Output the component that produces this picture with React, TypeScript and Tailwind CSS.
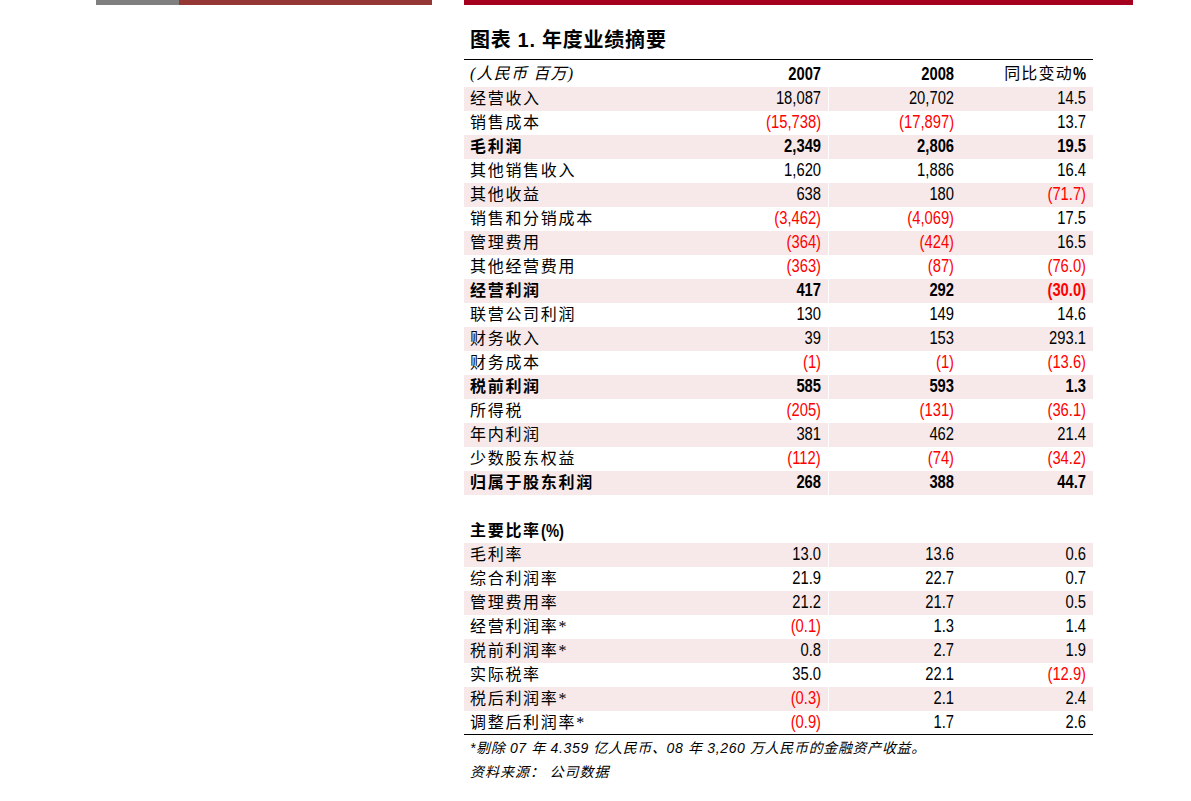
import React from "react";

type Row = { l: string; a: string; b: string; c: string; bold?: boolean };

const rows1: Row[] = [
  { l: "经营收入", a: "18,087", b: "20,702", c: "14.5" },
  { l: "销售成本", a: "(15,738)", b: "(17,897)", c: "13.7" },
  { l: "毛利润", a: "2,349", b: "2,806", c: "19.5", bold: true },
  { l: "其他销售收入", a: "1,620", b: "1,886", c: "16.4" },
  { l: "其他收益", a: "638", b: "180", c: "(71.7)" },
  { l: "销售和分销成本", a: "(3,462)", b: "(4,069)", c: "17.5" },
  { l: "管理费用", a: "(364)", b: "(424)", c: "16.5" },
  { l: "其他经营费用", a: "(363)", b: "(87)", c: "(76.0)" },
  { l: "经营利润", a: "417", b: "292", c: "(30.0)", bold: true },
  { l: "联营公司利润", a: "130", b: "149", c: "14.6" },
  { l: "财务收入", a: "39", b: "153", c: "293.1" },
  { l: "财务成本", a: "(1)", b: "(1)", c: "(13.6)" },
  { l: "税前利润", a: "585", b: "593", c: "1.3", bold: true },
  { l: "所得税", a: "(205)", b: "(131)", c: "(36.1)" },
  { l: "年内利润", a: "381", b: "462", c: "21.4" },
  { l: "少数股东权益", a: "(112)", b: "(74)", c: "(34.2)" },
  { l: "归属于股东利润", a: "268", b: "388", c: "44.7", bold: true },
];

const rows2: Row[] = [
  { l: "毛利率", a: "13.0", b: "13.6", c: "0.6" },
  { l: "综合利润率", a: "21.9", b: "22.7", c: "0.7" },
  { l: "管理费用率", a: "21.2", b: "21.7", c: "0.5" },
  { l: "经营利润率*", a: "(0.1)", b: "1.3", c: "1.4" },
  { l: "税前利润率*", a: "0.8", b: "2.7", c: "1.9" },
  { l: "实际税率", a: "35.0", b: "22.1", c: "(12.9)" },
  { l: "税后利润率*", a: "(0.3)", b: "2.1", c: "2.4" },
  { l: "调整后利润率*", a: "(0.9)", b: "1.7", c: "2.6" },
];

const cjk = "font-['Liberation_Serif','Noto_Sans_CJK_SC',serif]";
const num = "font-['Liberation_Sans','Noto_Sans_CJK_SC',sans-serif]";

function Narrow({ children, cls = "" }: { children: React.ReactNode; cls?: string }) {
  return (
    <span className={`inline-block origin-right scale-x-[0.82] ${num} text-[18px] leading-none ${cls}`}>
      {children}
    </span>
  );
}

function Num({ v, bold, cls }: { v: string; bold?: boolean; cls: string }) {
  const neg = v.startsWith("(");
  return (
    <div
      className={`${cls} flex items-center justify-end pr-[7px] pb-[2px] ${
        neg ? "text-[#ff0000]" : "text-black"
      } ${bold ? "font-bold" : "font-normal"}`}
    >
      <Narrow>{v}</Narrow>
    </div>
  );
}

function TableRow({ r, shaded }: { r: Row; shaded: boolean }) {
  return (
    <div className={`flex h-[24px] ${shaded ? "bg-[#f7e9e9]" : "bg-white"}`}>
      <div
        className={`w-[231px] flex items-center pl-[6px] ${cjk} text-[16px] tracking-[1.7px] text-black ${
          r.bold ? "font-bold" : "font-normal"
        }`}
      >
        {r.l}
      </div>
      <Num v={r.a} bold={r.bold} cls="w-[133px]" />
      <Num v={r.b} bold={r.bold} cls="w-[133px] border-l border-white" />
      <Num v={r.c} bold={r.bold} cls="w-[132px]" />
    </div>
  );
}

export default function App() {
  return (
    <div className="w-[1191px] h-[801px] bg-white flex overflow-hidden">
      <div className="w-[464px] pl-[96px] flex items-start">
        <div className="w-[83px] h-[5px] bg-[#7f7f7f]" />
        <div className="w-[253px] h-[5px] bg-[#953735]" />
      </div>
      <div className="w-[669px] flex flex-col">
        <div className="h-[5px] bg-[#a6001f]" />
        <div
          className={`mt-[21px] h-[28px] flex items-center pl-[6px] ${cjk} text-[20px] font-bold text-black tracking-[0.8px]`}
        >
          <span>图表</span>
          <span className={`${num} ml-[6px]`}>1.</span>
          <span className="ml-[6px]">年度业绩摘要</span>
        </div>
        <div className="w-[629px] mt-[5px] h-px bg-black" />
        <div className="w-[629px] flex flex-col">
          <div className="flex h-[27px] pt-[1px]">
            <div
              className={`w-[231px] flex items-center pl-[6px] ${cjk} italic text-[16px] tracking-[1.2px] text-black`}
            >
              (人民币 百万)
            </div>
            <div className="w-[133px] flex items-center justify-end pr-[7px] font-bold">
              <Narrow>2007</Narrow>
            </div>
            <div className="w-[133px] flex items-center justify-end pr-[7px] font-bold">
              <Narrow>2008</Narrow>
            </div>
            <div
              className={`w-[132px] flex items-center justify-end pr-[7px] ${cjk} text-[16px] tracking-[1.2px]`}
            >
              <span className="mr-[-3px]">同比变动</span>
              <Narrow cls="font-bold tracking-normal">%</Narrow>
            </div>
          </div>
          {rows1.map((r, i) => (
            <TableRow key={r.l} r={r} shaded={i % 2 === 0} />
          ))}
          <div className="h-[24px]" />
          <div
            className={`h-[24px] flex items-center pl-[6px] ${cjk} text-[16px] font-bold tracking-[1.7px] text-black`}
          >
            主要比率
            <span className={`inline-block origin-left scale-x-[0.82] ${num} text-[18px] leading-none tracking-normal`}>
              (%)
            </span>
          </div>
          {rows2.map((r, i) => (
            <TableRow key={r.l} r={r} shaded={i % 2 === 0} />
          ))}
          <div className="h-px bg-black -mt-px" />
          <div className={`mt-[1px] h-[24px] flex items-center pl-[6px] ${num} italic text-[14px] tracking-[0.65px] text-black`}>
            *剔除 07 年 4.359 亿人民币、08 年 3,260 万人民币的金融资产收益。
          </div>
          <div className={`h-[24px] flex items-center pl-[6px] ${cjk} italic text-[14px] tracking-[1px] text-black`}>
            资料来源： 公司数据
          </div>
        </div>
      </div>
    </div>
  );
}
